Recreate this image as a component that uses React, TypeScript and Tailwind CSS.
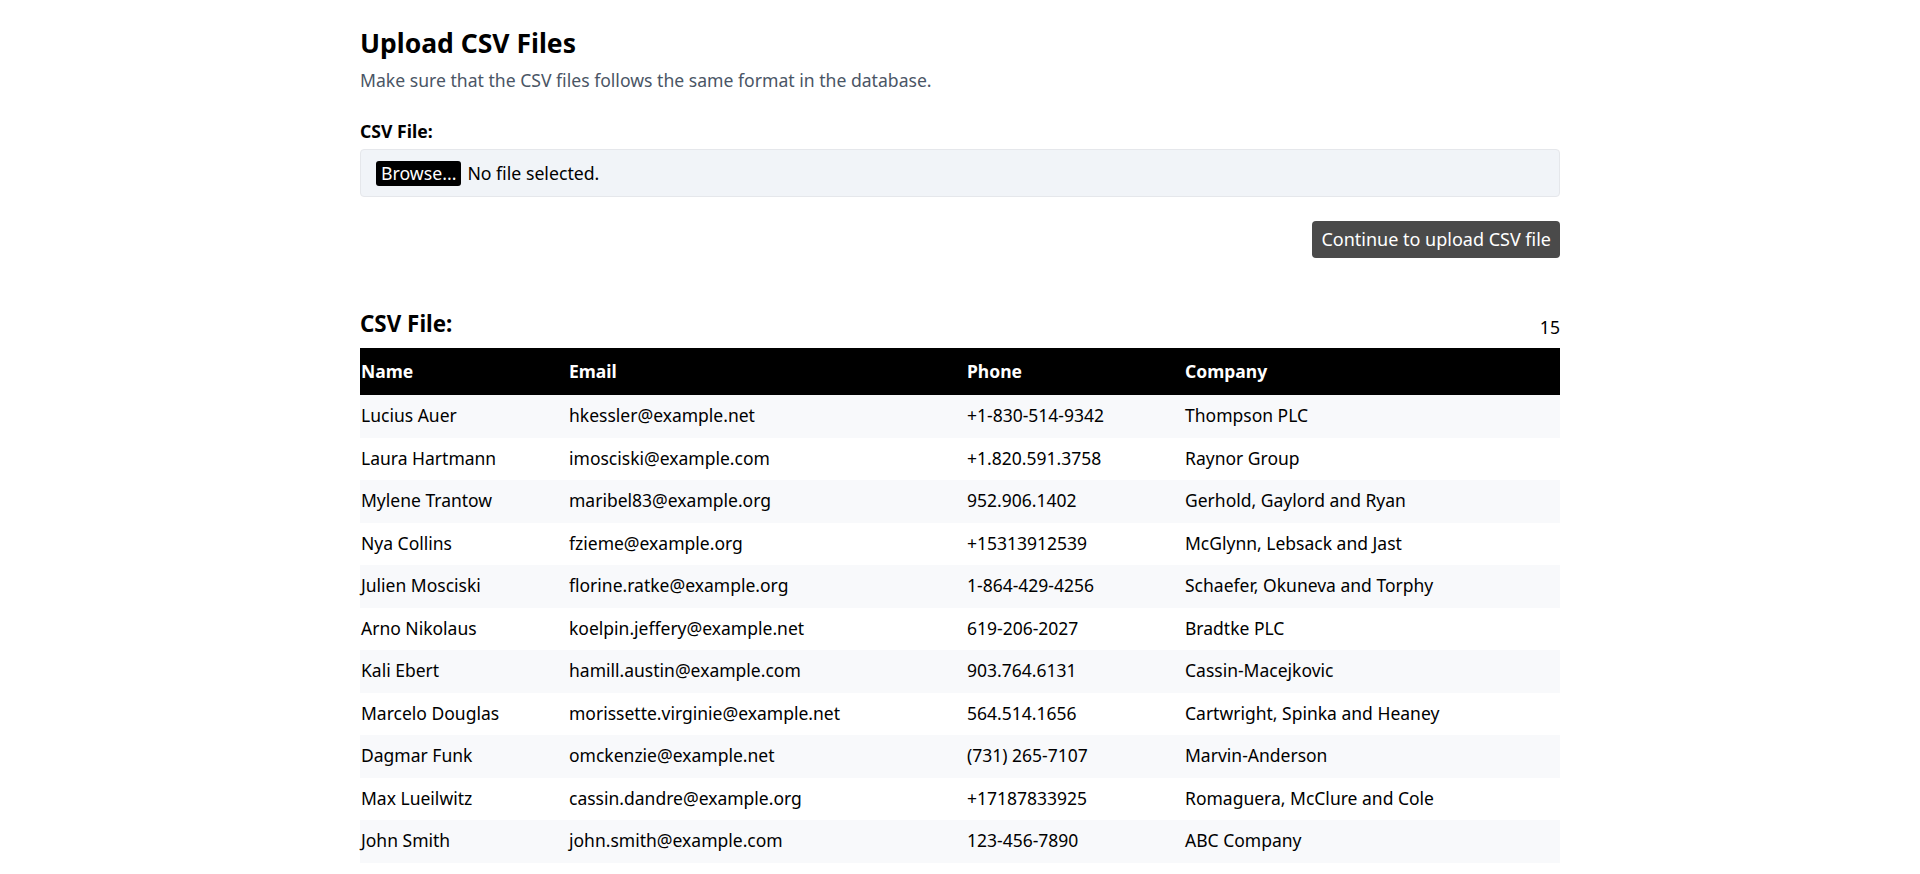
import React from "react";

type Row = { name: string; email: string; phone: string; company: string };

const ROWS: Row[] = [
  { name: "Lucius Auer", email: "hkessler@example.net", phone: "+1-830-514-9342", company: "Thompson PLC" },
  { name: "Laura Hartmann", email: "imosciski@example.com", phone: "+1.820.591.3758", company: "Raynor Group" },
  { name: "Mylene Trantow", email: "maribel83@example.org", phone: "952.906.1402", company: "Gerhold, Gaylord and Ryan" },
  { name: "Nya Collins", email: "fzieme@example.org", phone: "+15313912539", company: "McGlynn, Lebsack and Jast" },
  { name: "Julien Mosciski", email: "florine.ratke@example.org", phone: "1-864-429-4256", company: "Schaefer, Okuneva and Torphy" },
  { name: "Arno Nikolaus", email: "koelpin.jeffery@example.net", phone: "619-206-2027", company: "Bradtke PLC" },
  { name: "Kali Ebert", email: "hamill.austin@example.com", phone: "903.764.6131", company: "Cassin-Macejkovic" },
  { name: "Marcelo Douglas", email: "morissette.virginie@example.net", phone: "564.514.1656", company: "Cartwright, Spinka and Heaney" },
  { name: "Dagmar Funk", email: "omckenzie@example.net", phone: "(731) 265-7107", company: "Marvin-Anderson" },
  { name: "Max Lueilwitz", email: "cassin.dandre@example.org", phone: "+17187833925", company: "Romaguera, McClure and Cole" },
  { name: "John Smith", email: "john.smith@example.com", phone: "123-456-7890", company: "ABC Company" },
  { name: "Jane Doe", email: "jane.doe@example.com", phone: "987-654-3210", company: "XYZ Corporation" },
  { name: "Emily Clark", email: "emily.clark@example.com", phone: "555-123-4567", company: "Clark Industries" },
  { name: "Michael Brown", email: "michael.brown@example.com", phone: "555-987-6543", company: "Brown & Sons" },
  { name: "Sarah Lee", email: "sarah.lee@example.com", phone: "555-246-8101", company: "Lee Enterprises" },
];

export default function App() {
  return (
    <div className="h-screen overflow-y-auto bg-white font-['Noto_Sans',sans-serif] text-black">
      <div className="mx-auto w-[1200px] pb-16 pt-[27px]">
        <h1 className="text-[26.5px] font-bold leading-[32px]">Upload CSV Files</h1>
        <p className="mt-[9px] text-[17.6px] leading-[24px] text-gray-600">
          Make sure that the CSV files follows the same format in the database.
        </p>

        <form className="mt-[27px]" onSubmit={(e) => e.preventDefault()}>
          <label className="block text-[17.6px] font-bold leading-[24px]">CSV File:</label>
          <div className="mt-[6px] flex h-[48px] items-center gap-[6px] rounded border border-gray-200 bg-[#f1f4f8] px-[15px]">
            <span className="rounded-[3px] bg-black px-[5px] py-px text-[17.7px] leading-[23px] text-white">
              Browse...
            </span>
            <span className="text-[17.7px]">No file selected.</span>
          </div>
          <div className="mt-[24px] flex justify-end">
            <button
              type="submit"
              className="h-[37px] rounded bg-[#4a4a4a] px-[9px] text-[18px] text-white"
            >
              Continue to upload CSV file
            </button>
          </div>
        </form>

        <div className="mt-[51px] flex items-end justify-between">
          <h2 className="text-[22.4px] font-bold leading-[30px]">CSV File:</h2>
          <span className="text-[17.6px] leading-[24px]">{ROWS.length}</span>
        </div>

        <table className="mt-[9px] w-full table-fixed border-collapse text-left text-[17.5px]">
          <thead className="bg-black text-white">
            <tr className="h-[47px]">
              <th className="w-[208px] px-px font-bold">Name</th>
              <th className="w-[398px] px-px font-bold">Email</th>
              <th className="w-[218px] px-px font-bold">Phone</th>
              <th className="px-px font-bold">Company</th>
            </tr>
          </thead>
          <tbody>
            {ROWS.map((r, i) => (
              <tr key={r.email} className={i % 2 === 0 ? "h-[42.5px] bg-[#f8f9fb]" : "h-[42.5px] bg-white"}>
                <td className="px-px pb-[2px]">{r.name}</td>
                <td className="px-px pb-[2px]">{r.email}</td>
                <td className="px-px pb-[2px]">{r.phone}</td>
                <td className="px-px pb-[2px]">{r.company}</td>
              </tr>
            ))}
          </tbody>
        </table>
      </div>
    </div>
  );
}
